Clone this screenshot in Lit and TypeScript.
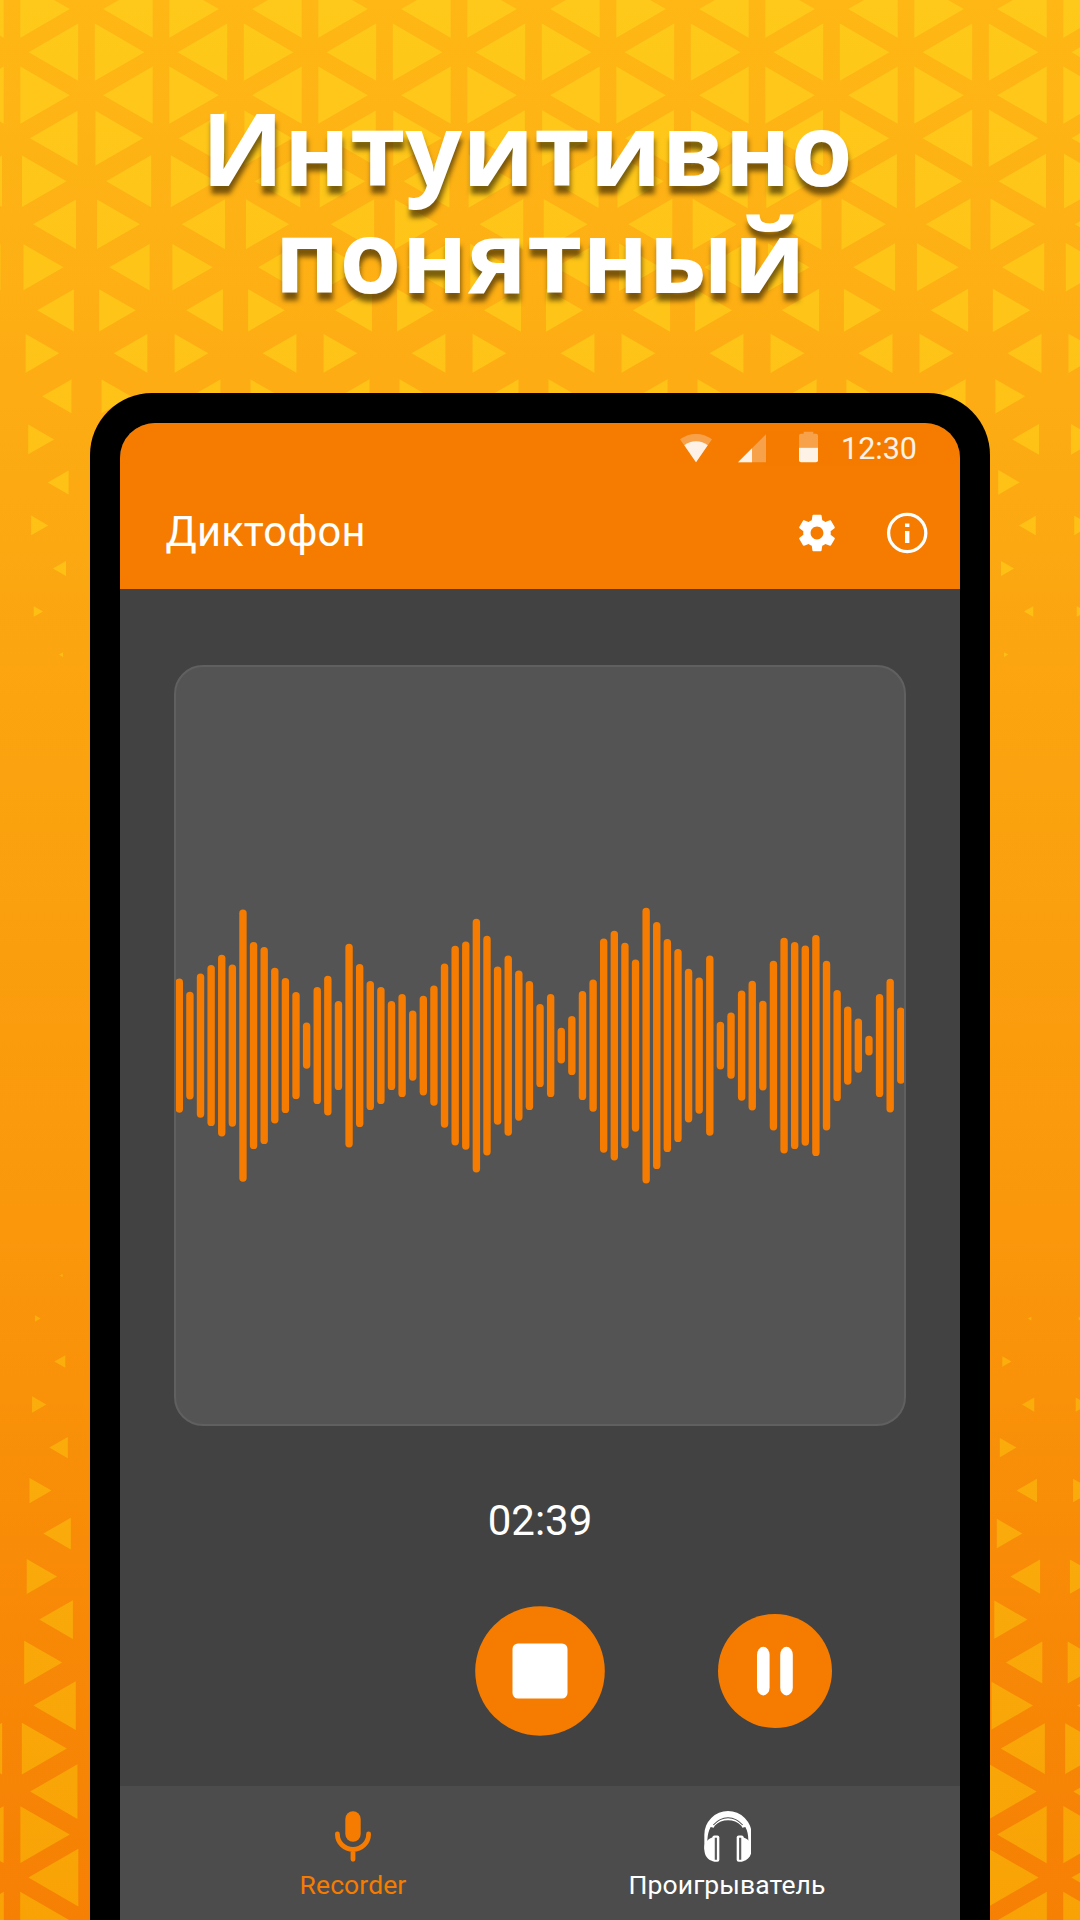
import { LitElement, html, css, svg } from "lit";
import { customElement } from "lit/decorators.js";

/* Triangle lattice: columns every 74.5px, rows every 43px. */
const COL = 74.5;
const ORIGIN_X = 12;

/* Each row: centre y, column parity, scale at the left edge, scale at the right edge. */
type Row = [number, number, number, number];

const topScales: [number, number][] = [
  [0.664, 0.664], [0.664, 0.664], [0.664, 0.664], [0.635, 0.668], [0.597, 0.638],
  [0.573, 0.602], [0.536, 0.565], [0.49, 0.503], [0.45, 0.457], [0.393, 0.4],
  [0.347, 0.357], [0.278, 0.288], [0.229, 0.225], [0.175, 0.175], [0.124, 0.124],
  [0.055, 0.055], [0.008, 0.008],
];
const bottomScales: [number, number][] = [
  [0.04, 0], [0.076, 0.045], [0.148, 0.12], [0.192, 0.165], [0.25, 0.219],
  [0.295, 0.273], [0.371, 0.34], [0.407, 0.398], [0.452, 0.443], [0.51, 0.488],
  [0.568, 0.555], [0.604, 0.59], [0.635, 0.63], [0.662, 0.664], [0.67, 0.67], [0.67, 0.67],
];

const rows: Row[] = [
  ...topScales.map(([a, b], k): Row => [9.1 + 43.03 * k, k % 2, a, b]),
  ...bottomScales.map(([a, b], k): Row => [1275.6 + 43 * k, (k + 1) % 2, a, b]),
];

function trianglePath(): string {
  let d = "";
  for (const [y, parity, a, b] of rows) {
    for (let j = parity - 2; j <= 16; j += 2) {
      const line = ORIGIN_X + j * COL;
      const s = a + (b - a) * Math.min(1, Math.max(0, line / 1080));
      if (s <= 0.005) continue;
      const h = s * 43;
      for (const dir of [1, -1]) {
        const c = line + (dir * COL) / 3;
        const base = (c - (dir * s * COL) / 3).toFixed(2);
        const tip = (c + (dir * s * COL * 2) / 3).toFixed(2);
        d += `M${base} ${(y - h).toFixed(2)}V${(y + h).toFixed(2)}L${tip} ${y.toFixed(2)}Z`;
      }
    }
  }
  return d;
}

const BAR_HEIGHTS = [
  265, 305, 250, 225, 194, 223, 58, 156, 171, 233, 264, 306, 397, 291, 257, 333, 161, 222, 273,
  291, 333, 312, 361, 317, 286, 220, 167, 154, 86, 137, 229, 196, 241, 273, 342, 312, 413, 378,
  303, 268, 145, 122, 158, 208, 53, 96, 147, 177, 236, 262, 196, 395, 367, 301, 272, 332, 212,
  143, 156, 166, 135, 212, 300, 349, 385, 437, 312, 266, 352,
].map((t) => ((466.5 - t) * 2) / 3);

@customElement("triangle-backdrop")
class TriangleBackdrop extends LitElement {
  static styles = css`
    :host { display: block; }
    .art { display: block; width: 100%; height: 100%; }
  `;
  render() {
    return html`<svg class="art" viewBox="0 0 1080 1920">
      <defs>
        <linearGradient id="tri" gradientUnits="userSpaceOnUse" x1="0" y1="0" x2="0" y2="1920">
          <stop offset="0" stop-color="#fec91a"></stop>
          <stop offset="0.3" stop-color="#fec015"></stop>
          <stop offset="0.7" stop-color="#fbae0c"></stop>
          <stop offset="1" stop-color="#f8a206"></stop>
        </linearGradient>
      </defs>
      <path d=${trianglePath()} fill="url(#tri)"></path>
    </svg>`;
  }
}

@customElement("sound-wave")
class SoundWave extends LitElement {
  static styles = css`
    :host { display: block; }
    .wave { display: block; }
    .bar { fill: #f57c00; }
  `;
  render() {
    return html`<svg class="wave" width="728" height="284" viewBox="0 0 728 284">
      ${BAR_HEIGHTS.map(
        (h, i) => svg`<rect class="bar" x=${-0.4 + i * 10.61} y=${142.6 - h / 2} width="7.4" height=${h} rx="3.7"></rect>`
      )}
    </svg>`;
  }
}

@customElement("app-root")
class AppRoot extends LitElement {
  static styles = css`
    :host { display: block; }
    .page {
      position: relative;
      width: 1080px;
      height: 1920px;
      overflow: hidden;
      display: flex;
      flex-direction: column;
      align-items: center;
      background: linear-gradient(#feb715 0, #fdac13 400px, #fba510 660px, #fa970b 1240px, #f88b07 1560px, #f68004 1920px);
      font-family: Roboto, "Liberation Sans", sans-serif;
      color: #fff;
    }
    .backdrop { position: absolute; inset: 0; }
    .headline {
      position: relative;
      box-sizing: border-box;
      height: 393px;
      flex: none;
      margin: 0;
      padding-top: 94px;
      font: 700 100px/107.3px "Open Sans", "Noto Sans", sans-serif;
      text-align: center;
      text-shadow: 1px 8px 5px rgba(0, 0, 0, 0.52);
    }
    .line { display: block; }
    .first { padding-right: 26px; }
    .phone {
      position: relative;
      box-sizing: border-box;
      width: 900px;
      flex: 1;
      display: flex;
      padding: 30px 30px 0;
      background: #000;
      border-radius: 62px 62px 0 0;
    }
    .screen {
      flex: 1;
      display: flex;
      flex-direction: column;
      align-items: center;
      overflow: hidden;
      background: #424242;
      border-radius: 35px 35px 0 0;
    }
    .header {
      box-sizing: border-box;
      width: 100%;
      height: 166px;
      flex: none;
      background: #f57c00;
    }
    .status {
      display: flex;
      justify-content: flex-end;
      height: 31px;
      padding: 10px 43px 0 0;
      opacity: 0.9;
    }
    .status svg { display: block; }
    .signal { margin-left: 26px; }
    .battery { margin-left: 33px; }
    .clock { margin-left: 23px; font-size: 30.5px; line-height: 31px; }
    .bar {
      display: flex;
      align-items: center;
      height: 113px;
      margin-top: 12px;
      padding: 0 31px 0 45.5px;
    }
    .title { flex: 1; padding-bottom: 2px; font-size: 41.6px; line-height: 40px; letter-spacing: 0.2px; }
    .bar svg { display: block; }
    .info { margin-left: 46px; }
    .card {
      box-sizing: border-box;
      width: 732px;
      height: 761px;
      flex: none;
      margin-top: 75.5px;
      display: flex;
      align-items: center;
      justify-content: center;
      overflow: hidden;
      background: #545454;
      border: 2px solid #606060;
      border-radius: 29px;
    }
    .timer { margin-top: 74px; font-size: 42px; line-height: 42px; }
    .controls {
      display: grid;
      grid-template-columns: repeat(3, 234.6px);
      place-items: center;
      margin-top: 64.5px;
    }
    .stop { grid-column: 2; display: block; }
    .pause { display: block; }
    .nav {
      box-sizing: border-box;
      width: 100%;
      height: 134px;
      margin-top: auto;
      padding: 25px 46px 0;
      display: grid;
      grid-template-columns: 1fr 1fr;
      background: #4c4c4c;
    }
    .tab {
      display: flex;
      flex-direction: column;
      align-items: center;
      gap: 10px;
      font-size: 26.5px;
      line-height: 26px;
      letter-spacing: 0.1px;
    }
    .tab.active { color: #f57c00; }
    .tab svg { display: block; }
  `;

  render() {
    return html`<div class="page">
      <triangle-backdrop class="backdrop"></triangle-backdrop>
      <h1 class="headline">
        <span class="line first">Интуитивно</span><span class="line">понятный</span>
      </h1>
      <div class="phone">
        <div class="screen">
          <div class="header">
            <div class="status">
              <svg width="32" height="31" viewBox="0 0 32 31">
                <path d="M0 6.3Q7.5 1 16 1T32 6.3L16 29.3Z" fill="#fff" fill-opacity=".33"></path>
                <path d="M4.3 12.2Q9.5 8.2 16 8.2T27.7 12.2L16 29.3Z" fill="#fff"></path>
              </svg>
              <svg class="signal" width="28" height="31" viewBox="0 0 28 31">
                <path d="M28 1.3V29.2H0Z" fill="#fff" fill-opacity=".33"></path>
                <path d="M14 15.2V29.2H0Z" fill="#fff"></path>
              </svg>
              <svg class="battery" width="19" height="31" viewBox="0 0 19 31" overflow="visible">
                <path d="M4.7 -1.2H14.3V.7H17Q19 .7 19 2.7V14.8H0V2.7Q0 .7 2 .7H4.7Z" fill="#fff" fill-opacity=".33"></path>
                <path d="M0 14.8H19V27.2Q19 29.2 17 29.2H2Q0 29.2 0 27.2Z" fill="#fff"></path>
              </svg>
              <div class="clock">12:30</div>
            </div>
            <div class="bar">
              <div class="title">Диктофон</div>
              <svg width="44" height="44" viewBox="0 0 24 24" fill="#fff">
                <path d="M19.43 12.98c.04-.32.07-.64.07-.98s-.03-.66-.07-.98l2.11-1.65c.19-.15.24-.42.12-.64l-2-3.46c-.12-.22-.39-.3-.61-.22l-2.49 1c-.52-.4-1.08-.73-1.69-.98l-.38-2.65C14.46 2.18 14.25 2 14 2h-4c-.25 0-.46.18-.49.42l-.38 2.65c-.61.25-1.17.59-1.69.98l-2.49-1c-.23-.09-.49 0-.61.22l-2 3.46c-.13.22-.07.49.12.64l2.11 1.65c-.04.32-.07.65-.07.98s.03.66.07.98l-2.11 1.65c-.19.15-.24.42-.12.64l2 3.46c.12.22.39.3.61.22l2.49-1c.52.4 1.08.73 1.69.98l.38 2.65c.03.24.24.42.49.42h4c.25 0 .46-.18.49-.42l.38-2.65c.61-.25 1.17-.59 1.69-.98l2.49 1c.23.09.49 0 .61-.22l2-3.46c.12-.22.07-.49-.12-.64l-2.11-1.65zM12 15.5c-1.93 0-3.5-1.57-3.5-3.5s1.57-3.5 3.5-3.5 3.5 1.57 3.5 3.5-1.57 3.5-3.5 3.5z"></path>
              </svg>
              <svg class="info" width="44" height="44" viewBox="0 0 44 44">
                <circle cx="22.2" cy="22" r="18.6" fill="none" stroke="#fff" stroke-width="3.3"></circle>
                <path d="M20 12.5h4.4v3.4H20zM20 20h4.4v12H20z" fill="#fff"></path>
              </svg>
            </div>
          </div>
          <div class="card"><sound-wave></sound-wave></div>
          <div class="timer">02:39</div>
          <div class="controls">
            <svg class="stop" width="130" height="130" viewBox="0 0 130 130">
              <circle cx="65" cy="65" r="64.8" fill="#f57c00"></circle>
              <rect x="37.5" y="37.5" width="55" height="55" rx="5.5" fill="#fff"></rect>
            </svg>
            <svg class="pause" width="114" height="114" viewBox="0 0 114 114">
              <circle cx="57" cy="57" r="57" fill="#f57c00"></circle>
              <rect x="39" y="32.8" width="12.6" height="48.6" rx="6.3" ry="8" fill="#fff"></rect>
              <rect x="62.2" y="32.8" width="12.6" height="48.6" rx="6.3" ry="8" fill="#fff"></rect>
            </svg>
          </div>
          <div class="nav">
            <div class="tab active">
              <svg width="36" height="51" viewBox="0 0 36 51">
                <rect x="10.3" y="0.2" width="15.4" height="30.6" rx="7.7" fill="#f57c00"></rect>
                <path d="M2.4 23C2.4 32 9.5 38.4 18 38.4S33.6 32 33.6 23M18 38.5V48.3" fill="none" stroke="#f57c00" stroke-width="4.8" stroke-linecap="round"></path>
              </svg>
              <span>Recorder</span>
            </div>
            <div class="tab">
              <svg width="48.7" height="51" viewBox="248 63 146 153">
                <path d="M252 182V134a71 71 0 0 1 142 0V182L384 151Q384 127 375 111L366 113L363 107Q346 91 323 91T283 107L280 113L271 111Q262 127 261 151Z" fill="#fff"></path>
                <path d="M279 105Q298 83 323 83T367 105" fill="none" stroke="#4c4c4c" stroke-width="3.2"></path>
                <path d="M278 142C260 148 252 158 252 176C252 198 262 208 278 214ZM368 142C386 148 394 158 394 176C394 198 384 208 368 214Z" fill="#fff"></path>
                <rect x="276" y="136.500" width="21" height="79" rx="6" fill="#fff"></rect>
                <rect x="349" y="136.500" width="21" height="79" rx="6" fill="#fff"></rect>
                <path d="M286.500 143V209M359.500 143V209" stroke="#5a5a5a" stroke-width="6.5"></path>
              </svg>
              <span>Проигрыватель</span>
            </div>
          </div>
        </div>
      </div>
    </div>`;
  }
}
